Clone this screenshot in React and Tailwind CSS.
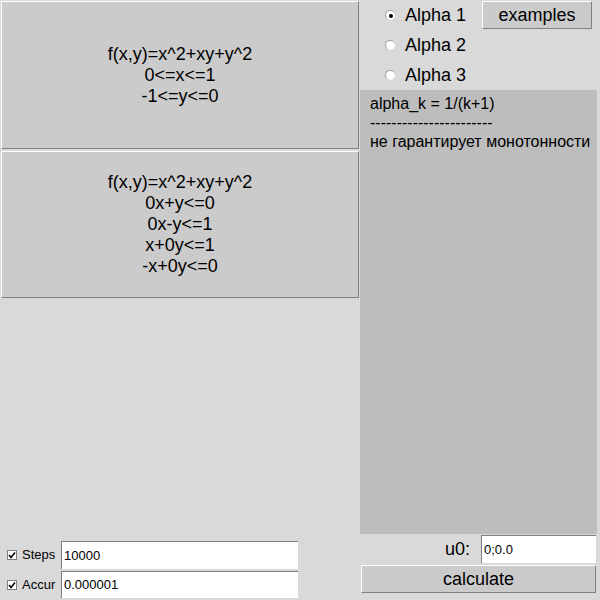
import React from 'react';

const font = { fontFamily: '"Liberation Sans", Arial, sans-serif' };

function Radio({ checked, label }) {
  return (
    <div className="h-[30px] flex items-center pl-[25px]">
      <span className="w-[10px] h-[10px] rounded-full bg-white border-t border-l border-[#a0a0a0] border-b-white border-r-white flex items-center justify-center">
        {checked && <span className="w-[4px] h-[4px] rounded-full bg-black" />}
      </span>
      <span className="ml-[10px] text-[18px] text-black leading-none">{label}</span>
    </div>
  );
}

function Check({ label }) {
  return (
    <div className="w-[60px] flex items-center pl-[6px] shrink-0">
      <span className="w-[10px] h-[10px] bg-white border border-[#808080] flex items-center justify-center">
        <svg width="8" height="8" viewBox="0 0 8 8">
          <path d="M1 4 L3 6.5 L7 1.5" stroke="black" strokeWidth="1.6" fill="none" />
        </svg>
      </span>
      <span className="ml-[5px] text-[13px] text-black">{label}</span>
    </div>
  );
}

function Field({ value, className }) {
  return (
    <div className={`bg-white border-t border-l border-[#808080] border-b-[#e6e6e6] border-r-[#e6e6e6] flex items-center pl-[2px] text-[13px] text-black ${className}`}>
      {value}
    </div>
  );
}

export default function App() {
  return (
    <div className="w-[600px] h-[600px] bg-[#d9d9d9] flex overflow-hidden" style={font}>
      <div className="w-[360px] flex flex-col pt-[1px] pl-[1px]">
        <div className="w-[358px] h-[148px] bg-[#cbcbcb] border border-white border-b-[#808080] border-r-[#808080] flex flex-col items-center justify-center text-[18px] leading-[21px] text-black">
          <div>f(x,y)=x^2+xy+y^2</div>
          <div>0&lt;=x&lt;=1</div>
          <div>-1&lt;=y&lt;=0</div>
        </div>
        <div className="mt-[2px] w-[358px] h-[147px] bg-[#cbcbcb] border border-white border-b-[#808080] border-r-[#808080] flex flex-col items-center justify-center text-[18px] leading-[21px] text-black">
          <div>f(x,y)=x^2+xy+y^2</div>
          <div>0x+y&lt;=0</div>
          <div>0x-y&lt;=1</div>
          <div>x+0y&lt;=1</div>
          <div>-x+0y&lt;=0</div>
        </div>
        <div className="flex-1" />
        <div className="flex h-[28px]">
          <Check label="Steps" />
          <Field value="10000" className="w-[237px] h-[28px]" />
        </div>
        <div className="flex h-[27px] mt-[2px] mb-[2px]">
          <Check label="Accur" />
          <Field value="0.000001" className="w-[237px] h-[27px]" />
        </div>
      </div>

      <div className="flex-1 flex flex-col">
        <div className="h-[90px] flex">
          <div className="w-[122px]">
            <Radio checked label="Alpha 1" />
            <Radio label="Alpha 2" />
            <Radio label="Alpha 3" />
          </div>
          <div className="mt-[1px] w-[110px] h-[28px] bg-[#cbcbcb] border border-white border-b-[#808080] border-r-[#808080] flex items-center justify-center text-[18px] text-black">
            examples
          </div>
        </div>
        <div className="flex-1 bg-[#bdbdbd] mr-[3px] pl-[10px] pt-[4px] text-[16px] leading-[19px] text-black">
          <div>alpha_k = 1/(k+1)</div>
          <div>-----------------------</div>
          <div>не гарантирует монотонности</div>
        </div>
        <div className="h-[28px] mt-[1px] flex items-center justify-end">
          <span className="text-[18px] text-black mr-[11px]">u0:</span>
          <Field value="0;0.0" className="w-[115px] h-[28px] mr-[4px]" />
        </div>
        <div className="mt-[2px] mb-[7px] ml-[1px] w-[235px] h-[28px] bg-[#cbcbcb] border border-white border-b-[#808080] border-r-[#808080] flex items-center justify-center text-[18px] text-black">
          calculate
        </div>
      </div>
    </div>
  );
}
